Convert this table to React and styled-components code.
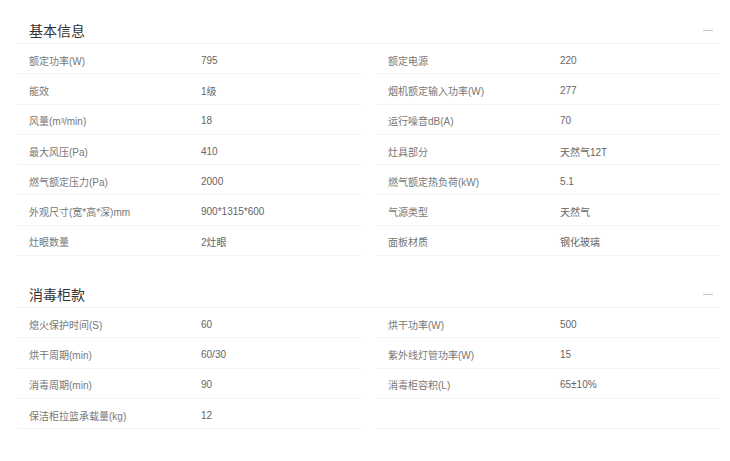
import React from 'react';
import styled, { createGlobalStyle } from 'styled-components';

const GlobalStyle = createGlobalStyle`
  html, body {
    margin: 0;
    padding: 0;
    background: #fff;
  }
  body {
    font-family: "Liberation Sans", "Noto Sans CJK SC", sans-serif;
  }
`;

const Page = styled.div`
  width: 730px;
  padding: 17px 10px 0 17px;
  box-sizing: border-box;
`;

const Section = styled.section`
  margin-bottom: 25px;
`;

const Header = styled.div`
  height: 27px;
  display: flex;
  align-items: center;
  justify-content: space-between;
  border-bottom: 1px solid #efefef;
  box-sizing: border-box;
  padding: 0 7px 0 12px;
`;

const Title = styled.h3`
  margin: 0;
  font-size: 14px;
  font-weight: normal;
  color: #333;
`;

const Collapse = styled.span`
  width: 10px;
  height: 1px;
  background: #c4c4c4;
`;

const Grid = styled.div`
  display: grid;
  grid-template-columns: 344px 344px;
  column-gap: 15px;
`;

const Row = styled.div`
  height: 30.3px;
  box-sizing: border-box;
  display: flex;
  align-items: center;
  border-bottom: 1px solid #f4f4f4;
  padding: 3px 0 0 12px;
  font-size: 10px;
`;

const Label = styled.span`
  width: 172px;
  color: #777;
`;

const Value = styled.span`
  color: #666;
`;

const basic = [
  ['额定功率(W)', '795'],
  ['额定电源', '220'],
  ['能效', '1级'],
  ['烟机额定输入功率(W)', '277'],
  ['风量(m³/min)', '18'],
  ['运行噪音dB(A)', '70'],
  ['最大风压(Pa)', '410'],
  ['灶具部分', '天然气12T'],
  ['燃气额定压力(Pa)', '2000'],
  ['燃气额定热负荷(kW)', '5.1'],
  ['外观尺寸(宽*高*深)mm', '900*1315*600'],
  ['气源类型', '天然气'],
  ['灶眼数量', '2灶眼'],
  ['面板材质', '钢化玻璃'],
];

const cabinet = [
  ['熄火保护时间(S)', '60'],
  ['烘干功率(W)', '500'],
  ['烘干周期(min)', '60/30'],
  ['紫外线灯管功率(W)', '15'],
  ['消毒周期(min)', '90'],
  ['消毒柜容积(L)', '65±10%'],
  ['保洁柜拉篮承载量(kg)', '12'],
  ['', ''],
];

const SpecSection = ({ title, items }) => (
  <Section>
    <Header>
      <Title>{title}</Title>
      <Collapse />
    </Header>
    <Grid>
      {items.map(([k, v], i) => (
        <Row key={i}>
          <Label>{k}</Label>
          <Value>{v}</Value>
        </Row>
      ))}
    </Grid>
  </Section>
);

const App = () => (
  <Page>
    <GlobalStyle />
    <SpecSection title="基本信息" items={basic} />
    <SpecSection title="消毒柜款" items={cabinet} />
  </Page>
);

export default App;
